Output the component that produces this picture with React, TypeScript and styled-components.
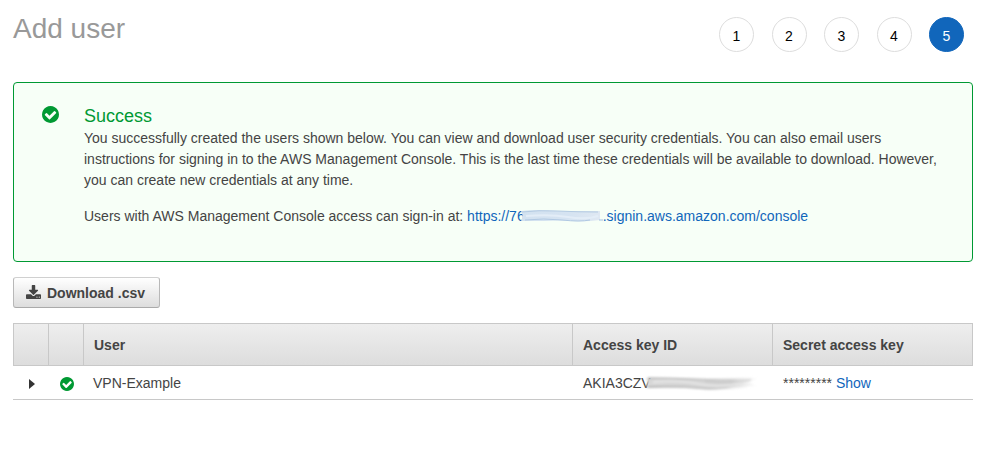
import React from "react";
import styled, { createGlobalStyle } from "styled-components";

const GlobalStyle = createGlobalStyle`
  * { box-sizing: border-box; }
  body {
    margin: 0;
    background: #fff;
    color: #444;
    font: 14px/21px "Liberation Sans", Arial, sans-serif;
  }
`;

const Page = styled.main`
  padding: 10px 35px 24px 13px;
`;

const Header = styled.header`
  display: flex;
  justify-content: space-between;
  align-items: flex-start;
  height: 72px;
`;

const Title = styled.h1`
  margin: 0;
  color: #999;
  font-size: 28px;
  font-weight: 400;
  line-height: 38px;
`;

const Steps = styled.ol`
  display: flex;
  justify-content: space-between;
  width: 245px;
  margin: 7px 9px 0 0;
  padding: 0;
  list-style: none;
`;

const Step = styled.li<{ $active?: boolean }>`
  width: 35px;
  height: 35px;
  padding-top: 2px;
  border: 1px solid ${(p) => (p.$active ? "#1166bb" : "#ddd")};
  border-radius: 50%;
  background: ${(p) => (p.$active ? "#1166bb" : "#fff")};
  color: ${(p) => (p.$active ? "#fff" : "#000")};
  line-height: 33px;
  text-align: center;
`;

const Alert = styled.section`
  display: flex;
  align-items: flex-start;
  gap: 25px;
  padding: 23px 20px 19px 28px;
  border: 1px solid #093;
  border-radius: 4px;
  background: #f7fff7;
`;

const AlertTitle = styled.h2`
  margin: 0 0 1px;
  color: #093;
  font-size: 18px;
  font-weight: 400;
  line-height: 21px;
`;

const Paragraph = styled.p`
  margin: 0 0 15px;
`;

const Link = styled.a`
  color: #1166bb;
  text-decoration: none;
`;

const CheckSvg = styled.svg<{ $size: number }>`
  flex: none;
  display: block;
  width: ${(p) => p.$size}px;
  height: ${(p) => p.$size}px;
  fill: #093;
`;

const DownloadButton = styled.button`
  display: flex;
  align-items: center;
  gap: 6px;
  height: 31px;
  margin: 15px 0;
  padding: 2px 14px 0 12px;
  border: 1px solid #bbb;
  border-color: #d0d0d0 #b8b8b8 #aaa;
  border-radius: 3px;
  background: linear-gradient(#fff, #ddd);
  color: #444;
  font: bold 14px/21px "Liberation Sans", Arial, sans-serif;
  cursor: pointer;

  svg {
    width: 15px;
    height: 14px;
    margin-bottom: 4px;
    fill: #444;
  }
`;

const Table = styled.table`
  width: 100%;
  table-layout: fixed;
  border-spacing: 0;
`;

const Col = styled.col<{ $width?: number }>`
  width: ${(p) => (p.$width ? `${p.$width}px` : "auto")};
`;

const HeadCell = styled.th`
  height: 43px;
  padding: 1px 10px 0;
  border: 1px solid #c8c8c8;
  border-right-width: 0;
  background: linear-gradient(#eee, #ddd);
  text-align: left;

  &:last-child { border-right-width: 1px; }
`;

const Cell = styled.td`
  height: 34px;
  padding: 1px 10px 0;
  border-bottom: 1px solid #c8c8c8;
  white-space: nowrap;
`;

const KeyCell = styled(Cell)`
  padding-left: 11px;
`;

const IconCell = styled(Cell)`
  padding: 3px 0 0 12px;
`;

const ExpandButton = styled.button`
  display: block;
  padding: 0 4px;
  border: 0;
  background: none;
  cursor: pointer;

  svg { display: block; width: 6px; height: 10px; fill: #333; }
`;

const Smudge = styled.svg<{ $width: number; $pull: number }>`
  width: ${(p) => p.$width}px;
  height: 18px;
  margin: -4px 0 -4px ${(p) => -p.$pull}px;
  overflow: visible;
  vertical-align: baseline;
`;

const CheckIcon = ({ size }: { size: number }) => (
  <CheckSvg $size={size} viewBox="0 0 1536 1536" aria-hidden="true">
    <path d="M1284 606q0-28-18-46l-91-90q-19-19-45-19t-45 19l-408 407-226-226q-19-19-45-19t-45 19l-91 90q-18 18-18 46 0 27 18 45l362 362q19 19 45 19 27 0 46-19l543-543q18-18 18-45zm252 162q0 209-103 385.5t-279.5 279.5-385.5 103-385.5-103-279.5-279.5-103-385.5 103-385.5 279.5-279.5 385.5-103 385.5 103 279.5 279.5 103 385.5z" />
  </CheckSvg>
);

const DownloadIcon = () => (
  <svg viewBox="0 0 1664 1536" aria-hidden="true">
    <path d="M1280 1344q0-26-19-45t-45-19-45 19-19 45 19 45 45 19 45-19 19-45zm256 0q0-26-19-45t-45-19-45 19-19 45 19 45 45 19 45-19 19-45zm128-224v320q0 40-28 68t-68 28h-1472q-40 0-68-28t-28-68v-320q0-40 28-68t68-28h465l135 136q58 56 136 56t136-56l136-136h464q40 0 68 28t28 68zm-325-569q17 41-14 70l-448 448q-18 19-45 19t-45-19l-448-448q-31-29-14-70 17-39 59-39h256v-448q0-26 19-45t45-19h256q26 0 45 19t19 45v448h256q42 0 59 39z" />
  </svg>
);

const UrlSmudge = () => (
  <Smudge $width={83} $pull={5} viewBox="0 0 83 18" aria-hidden="true">
    <defs>
      <filter id="softUrl" x="-10%" y="-30%" width="120%" height="160%">
        <feGaussianBlur stdDeviation="0.7" />
      </filter>
      <linearGradient id="urlFade">
        <stop offset="0" stopColor="#d3e2f0" />
        <stop offset="0.6" stopColor="#d5e3f1" />
        <stop offset="1" stopColor="#dfe8f2" />
      </linearGradient>
    </defs>
    <g filter="url(#softUrl)">
      <path d="M1 4Q18 2 38 4L80 4V13Q66 15 52 14T24 14L1 14Q4 9 1 4Z" fill="url(#urlFade)" />
      <path d="M2 5Q18 3 38 4T78 5" fill="none" stroke="#b4cbe2" />
      <path d="M5 13Q24 11 42 13T70 13" fill="none" stroke="#b0c8e2" />
      <path d="M6 9Q30 7 48 10T78 9" fill="none" stroke="#e3edf7" strokeWidth="2" />
    </g>
    <path d="M79 13H83" fill="none" stroke="#a3c2e2" />
  </Smudge>
);

const AccessKeySmudge = () => (
  <Smudge $width={120} $pull={6} viewBox="0 0 120 18" aria-hidden="true">
    <defs>
      <filter id="softKey" x="-10%" y="-30%" width="120%" height="160%">
        <feGaussianBlur stdDeviation="0.9" />
      </filter>
      <linearGradient id="keyFade">
        <stop offset="0" stopColor="#d8d8d8" />
        <stop offset="0.75" stopColor="#d2d2d2" />
        <stop offset="1" stopColor="#e8e8e8" stopOpacity="0" />
      </linearGradient>
      <linearGradient id="lineFade" gradientUnits="userSpaceOnUse" x1="0" y1="0" x2="112" y2="0">
        <stop offset="0" stopColor="#999" />
        <stop offset="0.6" stopColor="#bbb" />
        <stop offset="1" stopColor="#ddd" stopOpacity="0" />
      </linearGradient>
    </defs>
    <g filter="url(#softKey)">
      <path d="M1 4Q28 4 52 5T104 4L115 4L103 8L112 12L88 13Q70 17 54 15Q36 13 1 14Q4 9 1 4Z" fill="url(#keyFade)" />
      <path d="M3 4Q26 4 50 5T108 4" fill="none" stroke="url(#lineFade)" />
      <path d="M3 13Q36 12 52 14T102 13" fill="none" stroke="url(#lineFade)" />
      <path d="M8 8Q34 6 54 10T98 9" fill="none" stroke="#e6e6e6" strokeWidth="2" />
      <path d="M60 7Q80 10 106 6" fill="none" stroke="#c4c4c4" />
    </g>
  </Smudge>
);

const steps = [1, 2, 3, 4, 5];

export default function App() {
  return (
    <>
      <GlobalStyle />
      <Page>
        <Header>
          <Title>Add user</Title>
          <Steps>
            {steps.map((n) => (
              <Step key={n} $active={n === 5} aria-current={n === 5 ? "step" : undefined}>
                {n}
              </Step>
            ))}
          </Steps>
        </Header>

        <Alert>
          <CheckIcon size={17} />
          <div>
            <AlertTitle>Success</AlertTitle>
            <Paragraph>
              You successfully created the users shown below. You can view and download user
              security credentials. You can also email users instructions for signing in to the AWS
              Management Console. This is the last time these credentials will be available to
              download. However, you can create new credentials at any time.
            </Paragraph>
            <Paragraph>
              Users with AWS Management Console access can sign-in at:{" "}
              <Link href="#console">
                https://76
                <UrlSmudge />
                .signin.aws.amazon.com/console
              </Link>
            </Paragraph>
          </div>
        </Alert>

        <DownloadButton type="button">
          <DownloadIcon />
          Download .csv
        </DownloadButton>

        <Table>
          <colgroup>
            <Col $width={35} />
            <Col $width={35} />
            <Col />
            <Col $width={200} />
            <Col $width={201} />
          </colgroup>
          <thead>
            <tr>
              <HeadCell aria-label="Expand" />
              <HeadCell aria-label="Status" />
              <HeadCell>User</HeadCell>
              <HeadCell>Access key ID</HeadCell>
              <HeadCell>Secret access key</HeadCell>
            </tr>
          </thead>
          <tbody>
            <tr>
              <IconCell>
                <ExpandButton type="button" aria-label="Expand row">
                  <svg viewBox="0 0 6 10" aria-hidden="true">
                    <path d="M0 0L6 5L0 10Z" />
                  </svg>
                </ExpandButton>
              </IconCell>
              <IconCell>
                <CheckIcon size={14} />
              </IconCell>
              <Cell>VPN-Example</Cell>
              <KeyCell>
                AKIA3CZV
                <AccessKeySmudge />
              </KeyCell>
              <KeyCell>
                ********* <Link href="#show">Show</Link>
              </KeyCell>
            </tr>
          </tbody>
        </Table>
      </Page>
    </>
  );
}
